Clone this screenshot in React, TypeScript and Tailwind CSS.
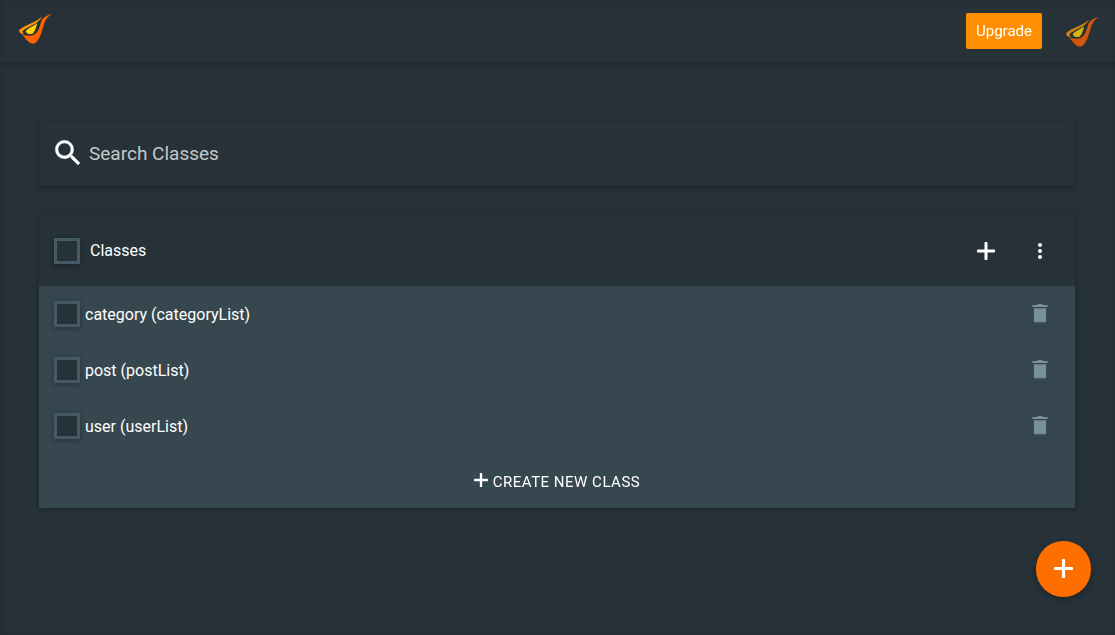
const rows = ['category (categoryList)', 'post (postList)', 'user (userList)'];

const raised =
  'shadow-[0_2px_3px_0_rgba(0,0,0,0.12),0_1px_6px_0_rgba(0,0,0,0.18)]';

function Logo({ className = '' }: { className?: string }) {
  return (
    <svg viewBox="0 0 34 32" width="34" height="32" className={className} aria-hidden="true">
      <path
        fill="#ff6000"
        d="M33.800 .8C30 1.900 25.500 4 23.600 7.200C22.500 11 21.500 15 19.300 18.700C17.200 22.100 14 22.900 10 22.600C7.500 22.400 5.500 22.200 4 21.700C6.500 23.500 8 27.500 13 30.200C15.500 31.200 17.300 30.500 19.600 27.500C23 23 24 17.500 25.600 12.500C27 7.800 28.700 4.500 33.800 .8Z"
      />
      <path
        fill="#ff9800"
        d="M24 3.400C18.500 9.200 7 11.500 1 17.300C1.300 20 3 21.300 6.500 21.500C5 20.300 4.300 19.300 4.600 18C9 13.300 20.500 11.500 24 3.400Z"
      />
      <path
        fill="#ffd600"
        d="M19.200 10.100C16.500 13.200 10.500 14.300 7.600 18.500C8.600 20.500 11 21.500 14.200 20.900C17.200 18.800 18.300 14 19.200 10.100Z"
      />
    </svg>
  );
}

function Icon({ d, size, className = '' }: { d: string; size: number; className?: string }) {
  return (
    <svg viewBox="0 0 24 24" width={size} height={size} fill="currentColor" className={className} aria-hidden="true">
      <path d={d} />
    </svg>
  );
}

function Plus({ size, className = '' }: { size: number; className?: string }) {
  return (
    <svg viewBox="0 0 18 18" width={size} height={size} fill="currentColor" className={className} aria-hidden="true">
      <rect x="7.5" y="0" width="3" height="18" rx=".8" />
      <rect x="0" y="7.5" width="18" height="3" rx=".8" />
    </svg>
  );
}

function Check() {
  return <span className={`block size-[26px] shrink-0 border-[3px] border-[#455a64] bg-[#263238] ${raised}`} />;
}

export default function App() {
  return (
    <div className="flex h-[635px] w-full flex-col overflow-hidden bg-[#263238] font-[Roboto,sans-serif] text-base text-white shadow-[inset_0_0_5px_0_rgba(0,0,0,0.14)]">
      <header className={`flex h-[62px] shrink-0 items-center justify-between pr-4 pl-[18px] ${raised}`}>
        <Logo className="mb-1" />
        <div className="flex items-center gap-[23px]">
          <button className="h-9 w-[76px] rounded-[2px] bg-[#ff8f00] text-[15px] will-change-transform">Upgrade</button>
          <Logo className="mt-px opacity-80" />
        </div>
      </header>

      <main className="flex flex-col gap-7 pt-[60px] pr-10 pl-[39px]">
        <label className={`flex h-16 items-center rounded-[4px] pl-[11.5px] ${raised}`}>
          <Icon
            size={34}
            className="mr-[4.5px] mb-0.5 shrink-0 stroke-current stroke-[0.25]"
            d="M15.500 14h-.79l-.28-.27A6.471 6.471 0 0 0 16 9.500 6.500 6.500 0 1 0 9.500 16c1.610 0 3.090-.59 4.230-1.570l.27.28v.79l5 4.990L20.490 19l-4.990-5zm-6 0C7.010 14 5 11.990 5 9.500S7.010 5 9.500 5 14 7.010 14 9.500 11.990 14 9.500 14z"
          />
          <input
            className="w-full bg-transparent text-[19px] outline-none placeholder:text-[#c4c8ca]"
            placeholder="Search Classes"
          />
        </label>

        <section className={raised}>
          <div className="flex h-[72px] items-center pt-0.5 pr-[23px] pl-[15px]">
            <Check />
            <h2 className="ml-2.5 flex-1">Classes</h2>
            <Plus size={18} className="mr-[33px]" />
            <Icon
              size={24}
              d="M12 8c1.100 0 2-.9 2-2s-.9-2-2-2-2 .9-2 2 .9 2 2 2zm0 2c-1.100 0-2 .9-2 2s.9 2 2 2 2-.9 2-2-.9-2-2-2zm0 6c-1.100 0-2 .9-2 2s.9 2 2 2 2-.9 2-2-.9-2-2-2z"
            />
          </div>
          <div className="bg-[#37474f]">
            {rows.map((row) => (
              <div key={row} className="flex h-14 items-center pr-[23px] pl-[15px]">
                <Check />
                <span className="ml-[5px] flex-1 pt-0.5">{row}</span>
                <Icon
                  size={24}
                  className="mb-0.5 text-[#78909c]"
                  d="M6 7.200H18V20q0 1.200-1.200 1.200H7.200Q6 21.200 6 20ZM4.800 4H9l.6-.8q.2-.2.5-.2h3.800q.3 0 .5.2L15 4h4.200q.5 0 .5.500v1q0 .5-.5.500H4.800q-.5 0-.5-.5v-1q0-.5.5-.5Z"
                />
              </div>
            ))}
            <button className="flex h-[54px] w-full items-center justify-center gap-[5px] text-[15px] tracking-[0.5px] will-change-transform">
              <Plus size={14} className="mb-0.5" />
              <span className="pt-0.5">CREATE NEW CLASS</span>
            </button>
          </div>
        </section>
      </main>

      <button
        className="absolute top-[541px] left-[1036px] flex h-14 w-[55px] items-center justify-center rounded-full bg-[#ff6f00] pr-px pb-px shadow-[0_2px_6px_rgba(0,0,0,0.28)]"
        aria-label="Create"
      >
        <Plus size={19} />
      </button>
    </div>
  );
}
